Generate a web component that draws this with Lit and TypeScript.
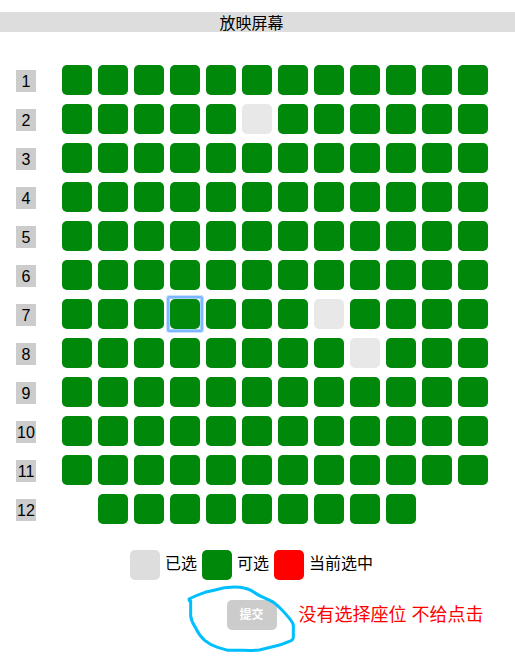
import { LitElement, html, css } from "lit";
import { customElement, property, state } from "lit/decorators.js";
import { classMap } from "lit/directives/class-map.js";

interface Row {
  number: number;
  first: number;
  last: number;
}

const rows: Row[] = Array.from({ length: 12 }, (_, i) => ({
  number: i + 1,
  first: i === 11 ? 2 : 1,
  last: i === 11 ? 10 : 12,
}));

const sold = new Set(["2-6", "7-8", "8-9"]);

@customElement("seat-row")
class SeatRow extends LitElement {
  @property({ attribute: false }) row!: Row;
  @property({ attribute: false }) picked: Set<string> = new Set();
  @property() focused = "";

  static styles = css`
    :host {
      display: flex;
      align-items: flex-start;
      gap: 26px;
    }
    .label {
      flex: none;
      width: 20px;
      margin-top: 5px;
      padding-top: 2px;
      line-height: 20px;
      text-align: center;
      background: #ccc;
    }
    .seats {
      display: grid;
      grid-template-columns: repeat(12, 30px);
      gap: 6px;
    }
    .seat {
      position: relative;
      width: 30px;
      height: 30px;
      padding: 0;
      border: 0;
      border-radius: 5px;
      background: #00880a;
      cursor: pointer;
    }
    .seat.sold {
      background: #e8e8e8;
      cursor: default;
    }
    .seat.picked {
      background: #f00;
    }
    .seat:focus {
      outline: none;
    }
    .seat.focused::after {
      content: "";
      position: absolute;
      inset: -3px;
      border: 2px solid #7ab8ff;
      border-radius: 2px;
      box-shadow: 0 0 0 1px #c8e1ff, inset 0 0 0 1px #a9d0ff;
    }
    .gap {
      width: 30px;
    }
  `;

  private pick(id: string) {
    this.dispatchEvent(new CustomEvent("pick", { detail: id }));
  }

  render() {
    const { number, first, last } = this.row;
    const cells = Array.from({ length: last }, (_, i) => i + 1);
    return html`
      <span class="label">${number}</span>
      <div class="seats">
        ${cells.map((n) => {
          const id = `${number}-${n}`;
          if (n < first) return html`<span class="gap"></span>`;
          return html`<button
            type="button"
            class=${classMap({
              seat: true,
              sold: sold.has(id),
              picked: this.picked.has(id),
              focused: this.focused === id,
            })}
            aria-label=${`${number}排${n}座`}
            aria-pressed=${this.picked.has(id) ? "true" : "false"}
            ?disabled=${sold.has(id)}
            @click=${() => this.pick(id)}
          ></button>`;
        })}
      </div>
    `;
  }
}

@customElement("app-root")
class AppRoot extends LitElement {
  @state() private picked: Set<string> = new Set();
  @state() private focused = "7-4";

  static styles = css`
    :host {
      display: block;
      padding: 12px 0 27px;
      background: #fff;
      color: #000;
      font-family: "Liberation Sans", "Noto Sans CJK SC", sans-serif;
      font-size: 16px;
    }
    .screen {
      margin: 0;
      padding: 4px 12px 0 0;
      font-size: 16px;
      font-weight: 400;
      line-height: 16px;
      text-align: center;
      background: #ddd;
    }
    .hall {
      display: flex;
      flex-direction: column;
      gap: 9px;
      padding: 33px 16px 26px;
    }
    .legend,
    .actions {
      display: flex;
      justify-content: center;
      padding-right: 12px;
    }
    .legend {
      gap: 5px;
      line-height: 28px;
    }
    .item {
      display: flex;
      gap: 5px;
      white-space: nowrap;
    }
    .swatch {
      width: 30px;
      height: 30px;
      border-radius: 5px;
    }
    .taken {
      background: #ddd;
    }
    .free {
      background: #00880a;
    }
    .current {
      background: #f00;
    }
    .actions {
      margin-top: 20px;
    }
    .submit-box {
      position: relative;
    }
    .submit {
      display: block;
      width: 50px;
      height: 30px;
      padding: 0;
      border: 0;
      border-radius: 5px;
      background: #ccc;
      color: #fff;
      font: bold 12px/30px "Liberation Sans", "Noto Sans CJK SC", sans-serif;
    }
    .submit:enabled {
      background: #00880a;
      cursor: pointer;
    }
    .ring {
      position: absolute;
      left: -47px;
      top: -20px;
      width: 130px;
      height: 77px;
      pointer-events: none;
    }
    .note {
      position: absolute;
      left: 72px;
      top: 0;
      color: #f00;
      font-size: 18px;
      line-height: 30px;
      white-space: nowrap;
    }
  `;

  private toggle(event: CustomEvent<string>) {
    const next = new Set(this.picked);
    if (!next.delete(event.detail)) next.add(event.detail);
    this.picked = next;
    this.focused = event.detail;
  }

  render() {
    return html`
      <h1 class="screen">放映屏幕</h1>
      <main class="hall">
        ${rows.map(
          (row) => html`<seat-row
            .row=${row}
            .picked=${this.picked}
            .focused=${this.focused}
            @pick=${this.toggle}
          ></seat-row>`
        )}
      </main>
      <div class="legend">
        <span class="item"><span class="swatch taken"></span>已选</span>
        <span class="item"><span class="swatch free"></span>可选</span>
        <span class="item"><span class="swatch current"></span>当前选中</span>
      </div>
      <div class="actions">
        <div class="submit-box">
          <button type="button" class="submit" ?disabled=${this.picked.size === 0}>提交</button>
          <svg class="ring" viewBox="0 0 390 231" aria-hidden="true">
            <path
              d="M28 62 L27 57 Q48 46 75 37 L105 30 Q140 19 180 22 Q205 25 222 37 Q238 48 258 56 Q282 65 300 84 Q324 108 336 126 Q341 132 340 145 L340 170 Q340 181 328 184 Q305 194 284 199 L238 210 Q215 212 190 211 L144 211 Q130 207 113 202 Q92 196 75 182 Q57 166 46 142 Q34 124 32 108 L32 62"
              fill="none"
              stroke="#00bfff"
              stroke-width="9"
              stroke-linecap="round"
              stroke-linejoin="round"
            />
          </svg>
          <span class="note">没有选择座位 不给点击</span>
        </div>
      </div>
    `;
  }
}
